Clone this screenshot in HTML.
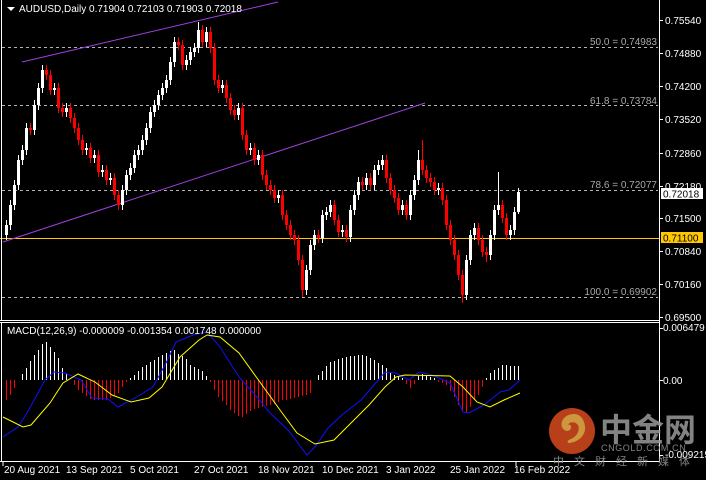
<!DOCTYPE html>
<html><head><meta charset="utf-8"><style>
html,body{margin:0;padding:0;background:#000;width:706px;height:480px;overflow:hidden}
svg{display:block;font-family:"Liberation Sans","Noto Sans CJK SC",sans-serif}
</style></head><body>
<svg width="706" height="480" viewBox="0 0 706 480" xmlns="http://www.w3.org/2000/svg">
<rect width="706" height="480" fill="#000"/>
<g stroke="#b4b4b4" stroke-dasharray="3,3" stroke-width="1">
<line x1="2" y1="47.5" x2="658" y2="47.5"/><line x1="2" y1="105.5" x2="658" y2="105.5"/>
<line x1="2" y1="190.5" x2="658" y2="190.5"/><line x1="2" y1="297.5" x2="658" y2="297.5"/>
</g>
<g fill="#a8a8a8" font-size="10" text-anchor="end">
<text x="657" y="45">50.0 = 0.74983</text><text x="657" y="104">61.8 = 0.73784</text>
<text x="657" y="188">78.6 = 0.72077</text><text x="657" y="295">100.0 = 0.69902</text>
</g>
<line x1="0" y1="238.5" x2="660" y2="238.5" stroke="#ffc800"/>
<line x1="22" y1="62" x2="278" y2="2" stroke="#a040e0"/>
<line x1="3" y1="242" x2="425" y2="103" stroke="#a040e0"/>

<!-- white candles -->
<path fill="none" stroke="#fff" stroke-width="1" d="M6.5 220V240M10.5 200V230M14.5 180V210M18.5 155V190M22.5 145V165M26.5 123V155M34.5 100V135M38.5 83V110M42.5 65V93M54.5 83V95M66.5 103V117M86.5 143V155M94.5 150V163M102.5 165V177M110.5 173V185M122.5 185V210M126.5 170V195M130.5 163V180M134.5 150V173M138.5 145V160M142.5 135V155M146.5 123V145M150.5 107V133M154.5 100V117M158.5 90V110M162.5 83V100M166.5 75V93M170.5 57V85M174.5 37V67M186.5 55V70M190.5 47V65M194.5 43V57M198.5 22V53M206.5 27V47M222.5 80V93M238.5 103V120M250.5 143V155M258.5 150V165M278.5 190V203M306.5 265V295M310.5 240V275M314.5 230V250M322.5 210V243M326.5 207V220M330.5 200V217M342.5 225V237M350.5 205V242M354.5 190V215M358.5 177V200M366.5 173V190M374.5 165V190M378.5 160V175M382.5 155V170M402.5 200V215M410.5 190V220M414.5 175V200M418.5 150V185M438.5 183V195M466.5 255V300M470.5 230V265M474.5 223V240M490.5 230V260M494.5 205V240M498.5 172V215M510.5 225V240M514.5 207V235M518.5 188V214"/>
<path fill="none" stroke="#fff" stroke-width="3" d="M6.5 235V225M10.5 225V205M14.5 205V185M18.5 185V160M22.5 160V150M26.5 150V128M34.5 130V105M38.5 105V88M42.5 88V70M54.5 90V88M66.5 112V108M86.5 150V148M94.5 158V155M102.5 172V170M110.5 180V178M122.5 205V190M126.5 190V175M130.5 175V168M134.5 168V155M138.5 155V150M142.5 150V140M146.5 140V128M150.5 128V112M154.5 112V105M158.5 105V95M162.5 95V88M166.5 88V80M170.5 80V62M174.5 62V42M186.5 65V60M190.5 60V52M194.5 52V48M198.5 48V30M206.5 42V32M222.5 88V85M238.5 115V108M250.5 150V148M258.5 160V155M278.5 198V195M306.5 290V270M310.5 270V245M314.5 245V235M322.5 238V215M326.5 215V212M330.5 212V205M342.5 232V230M350.5 237V210M354.5 210V195M358.5 195V182M366.5 185V178M374.5 185V170M378.5 170V165M382.5 165V160M402.5 210V205M410.5 215V195M414.5 195V180M418.5 180V160M438.5 190V188M466.5 295V260M470.5 260V235M474.5 235V228M490.5 255V235M494.5 235V210M498.5 210V205M510.5 235V230M514.5 230V212M518.5 212V192"/>
<!-- red candles -->
<path fill="none" stroke="#ff0000" stroke-width="1" d="M30.5 123V135M46.5 65V80M50.5 70V95M58.5 83V113M62.5 103V117M70.5 103V123M74.5 113V133M78.5 123V145M82.5 135V155M90.5 143V163M98.5 150V177M106.5 165V185M114.5 173V200M118.5 190V210M178.5 37V50M182.5 40V70M202.5 25V47M210.5 27V53M214.5 43V85M218.5 75V93M226.5 80V103M230.5 93V115M234.5 105V120M242.5 103V140M246.5 130V155M254.5 143V165M262.5 150V180M266.5 170V190M270.5 180V195M274.5 185V203M282.5 190V220M286.5 210V230M290.5 220V240M294.5 230V245M298.5 235V265M302.5 255V297M318.5 230V243M334.5 200V225M338.5 215V237M346.5 225V242M362.5 177V190M370.5 173V190M386.5 155V183M390.5 173V195M394.5 185V203M398.5 193V215M406.5 200V220M422.5 140V175M426.5 165V183M430.5 173V187M434.5 177V195M442.5 183V205M446.5 195V230M450.5 220V245M454.5 235V260M458.5 250V280M462.5 270V303M478.5 223V245M482.5 235V257M486.5 247V262M502.5 200V223M506.5 213V240"/>
<path fill="none" stroke="#ff0000" stroke-width="3" d="M30.5 128V130M46.5 70V75M50.5 75V90M58.5 88V108M62.5 108V112M70.5 108V118M74.5 118V128M78.5 128V140M82.5 140V150M90.5 148V158M98.5 155V172M106.5 170V180M114.5 178V195M118.5 195V205M178.5 42V45M182.5 45V65M202.5 30V42M210.5 32V48M214.5 48V80M218.5 80V88M226.5 85V98M230.5 98V110M234.5 110V115M242.5 108V135M246.5 135V150M254.5 148V160M262.5 155V175M266.5 175V185M270.5 185V190M274.5 190V198M282.5 195V215M286.5 215V225M290.5 225V235M294.5 235V240M298.5 240V260M302.5 260V290M318.5 235V238M334.5 205V220M338.5 220V232M346.5 230V237M362.5 182V185M370.5 178V185M386.5 160V178M390.5 178V190M394.5 190V198M398.5 198V210M406.5 205V215M422.5 160V170M426.5 170V178M430.5 178V182M434.5 182V190M442.5 188V200M446.5 200V225M450.5 225V240M454.5 240V255M458.5 255V275M462.5 275V295M478.5 228V240M482.5 240V252M486.5 252V255M502.5 205V218M506.5 218V235"/>

<!-- MACD histogram -->
<path fill="none" stroke="#fff" stroke-width="1" d="M22.5 380V374M26.5 380V368M30.5 380V361M34.5 380V355M38.5 380V350M42.5 380V344M46.5 380V342M50.5 380V347M54.5 380V352M58.5 380V358M62.5 380V368M66.5 380V374M130.5 380V378M134.5 380V375M138.5 380V371M142.5 380V367M146.5 380V365M150.5 380V362M154.5 380V360M158.5 380V357M162.5 380V355M166.5 380V353M170.5 380V351M174.5 380V350M178.5 380V354M182.5 380V356M186.5 380V359M190.5 380V365M194.5 380V367M198.5 380V369M202.5 380V371M206.5 380V376M318.5 380V375M322.5 380V371M326.5 380V366M330.5 380V362M334.5 380V361M338.5 380V359M342.5 380V358M346.5 380V357M350.5 380V356M354.5 380V356M358.5 380V355M362.5 380V355M366.5 380V356M370.5 380V358M374.5 380V360M378.5 380V363M382.5 380V365M386.5 380V368M390.5 380V372M394.5 380V375M398.5 380V377M402.5 380V378M418.5 380V376M422.5 380V374M426.5 380V376M430.5 380V377M434.5 380V378M486.5 380V378M490.5 380V373M494.5 380V370M498.5 380V368M502.5 380V365M506.5 380V365M510.5 380V366M514.5 380V366M518.5 380V366"/>
<path fill="none" stroke="#ff0000" stroke-width="1" d="M6.5 380V400M10.5 380V395M14.5 380V388M74.5 380V385M78.5 380V390M82.5 380V393M86.5 380V396M90.5 380V399M94.5 380V400M98.5 380V400M102.5 380V400M106.5 380V400M110.5 380V398M114.5 380V396M118.5 380V393M122.5 380V387M126.5 380V382M210.5 380V382M214.5 380V390M218.5 380V397M222.5 380V401M226.5 380V405M230.5 380V410M234.5 380V413M238.5 380V416M242.5 380V417M246.5 380V414M250.5 380V411M254.5 380V409M258.5 380V408M262.5 380V407M266.5 380V406M270.5 380V405M274.5 380V404M278.5 380V402M282.5 380V400M286.5 380V400M290.5 380V399M294.5 380V398M298.5 380V397M302.5 380V396M306.5 380V395M310.5 380V393M406.5 380V384M410.5 380V388M414.5 380V384M438.5 380V382M442.5 380V383M446.5 380V385M450.5 380V391M454.5 380V397M458.5 380V405M462.5 380V411M466.5 380V413M470.5 380V407M474.5 380V400M478.5 380V395M482.5 380V387"/>
<polyline fill="none" stroke="#1010ff" stroke-width="1" points="3,437 18,427 27,413 45,380 54,372 65,373 81,380 92,398 108,399 118,407 135,398 153,387 166,363 176,342 193,335 207,332 220,347 239,377 257,397 270,413 288,430 307,455 315,447 328,428 342,415 361,400 374,385 385,372 396,373 409,380 419,372 432,375 450,383 463,412 469,413 484,405 500,392 509,390 520,380"/>
<polyline fill="none" stroke="#ffff00" stroke-width="1" points="3,417 23,427 31,425 50,403 63,383 78,374 95,382 112,395 131,402 149,398 162,387 180,357 199,340 207,335 220,337 239,353 257,378 280,410 297,433 315,444 334,440 351,423 369,405 385,387 396,377 405,375 450,376 463,387 477,402 490,407 504,400 520,393"/>

<!-- frames -->
<line x1="1.5" y1="0" x2="1.5" y2="320" stroke="#fff"/>
<line x1="659.5" y1="0" x2="659.5" y2="461" stroke="#fff"/>
<line x1="0" y1="320.5" x2="660" y2="320.5" stroke="#fff"/>
<line x1="0" y1="322.5" x2="660" y2="322.5" stroke="#fff"/>
<line x1="0" y1="461.5" x2="660" y2="461.5" stroke="#fff"/>
<line x1="1.5" y1="322" x2="1.5" y2="461" stroke="#fff"/>
<path stroke="#fff" d="M660 20.5h3M660 53.5h3M660 86.5h3M660 119.5h3M660 153.5h3M660 186.5h3M660 218.5h3M660 251.5h3M660 284.5h3M660 317.5h3M660 328.5h3M660 380.5h3M660 455.5h3"/>
<g fill="#fff" font-size="10">
<text x="665" y="24">0.75540</text><text x="665" y="57">0.74880</text><text x="665" y="90">0.74200</text>
<text x="665" y="123">0.73520</text><text x="665" y="157">0.72860</text><text x="665" y="190">0.72180</text>
<text x="665" y="222">0.71500</text><text x="665" y="255">0.70840</text><text x="665" y="288">0.70160</text>
<text x="665" y="321">0.69500</text>
<text x="663" y="331">0.006479</text><text x="663" y="384">0.00</text><text x="665" y="458">-0.009215</text>
</g>
<rect x="661" y="188" width="42" height="11" fill="#fff"/>
<text x="663" y="197.5" font-size="10" fill="#000">0.72018</text>
<rect x="661" y="232" width="42" height="11" fill="#ffc800"/>
<text x="663" y="241.5" font-size="10" fill="#000">0.71100</text>
<polygon points="7,7 15,7 11,11" fill="#fff"/>
<text x="19" y="12" font-size="10" fill="#fff">AUDUSD,Daily  0.71904 0.72103 0.71903 0.72018</text>
<text x="7" y="334" font-size="10" fill="#fff">MACD(12,26,9) -0.000009 -0.001354 0.001748 0.000000</text>
<g fill="#fff" font-size="10">
<text x="4" y="473">20 Aug 2021</text><text x="66" y="473">13 Sep 2021</text><text x="130" y="473">5 Oct 2021</text>
<text x="194" y="473">27 Oct 2021</text><text x="258" y="473">18 Nov 2021</text><text x="322" y="473">10 Dec 2021</text>
<text x="386" y="473">3 Jan 2022</text><text x="450" y="473">25 Jan 2022</text><text x="514" y="473">16 Feb 2022</text>
</g>
<g stroke="#fff"><line x1="3" y1="462" x2="3" y2="466"/><line x1="516" y1="462" x2="516" y2="466"/></g>
<!-- logo -->
<g opacity="0.85">
<circle cx="572" cy="431" r="23" fill="#d84a1e"/>
<path d="M574 414c-9 0-14 7-12 13 2 5 8 5 9 1 1-3-2-4-3-3 1-3 6-4 9-1 4 4 1 12-6 15-3 1-5 3-2 4 10-1 17-8 16-17-1-7-5-12-11-12z" fill="#f2b24a"/>
<text x="600" y="441" font-size="32" font-weight="bold" fill="#9a9a9a">中金网</text>
<text x="601" y="451" font-size="9" fill="#9a9a9a" letter-spacing="0.6">CNGOLD.COM.CN</text>
<text x="553" y="465" font-size="11" fill="#9a9a9a" letter-spacing="10">中文财经新媒体</text>
</g>
</svg>
</body></html>
